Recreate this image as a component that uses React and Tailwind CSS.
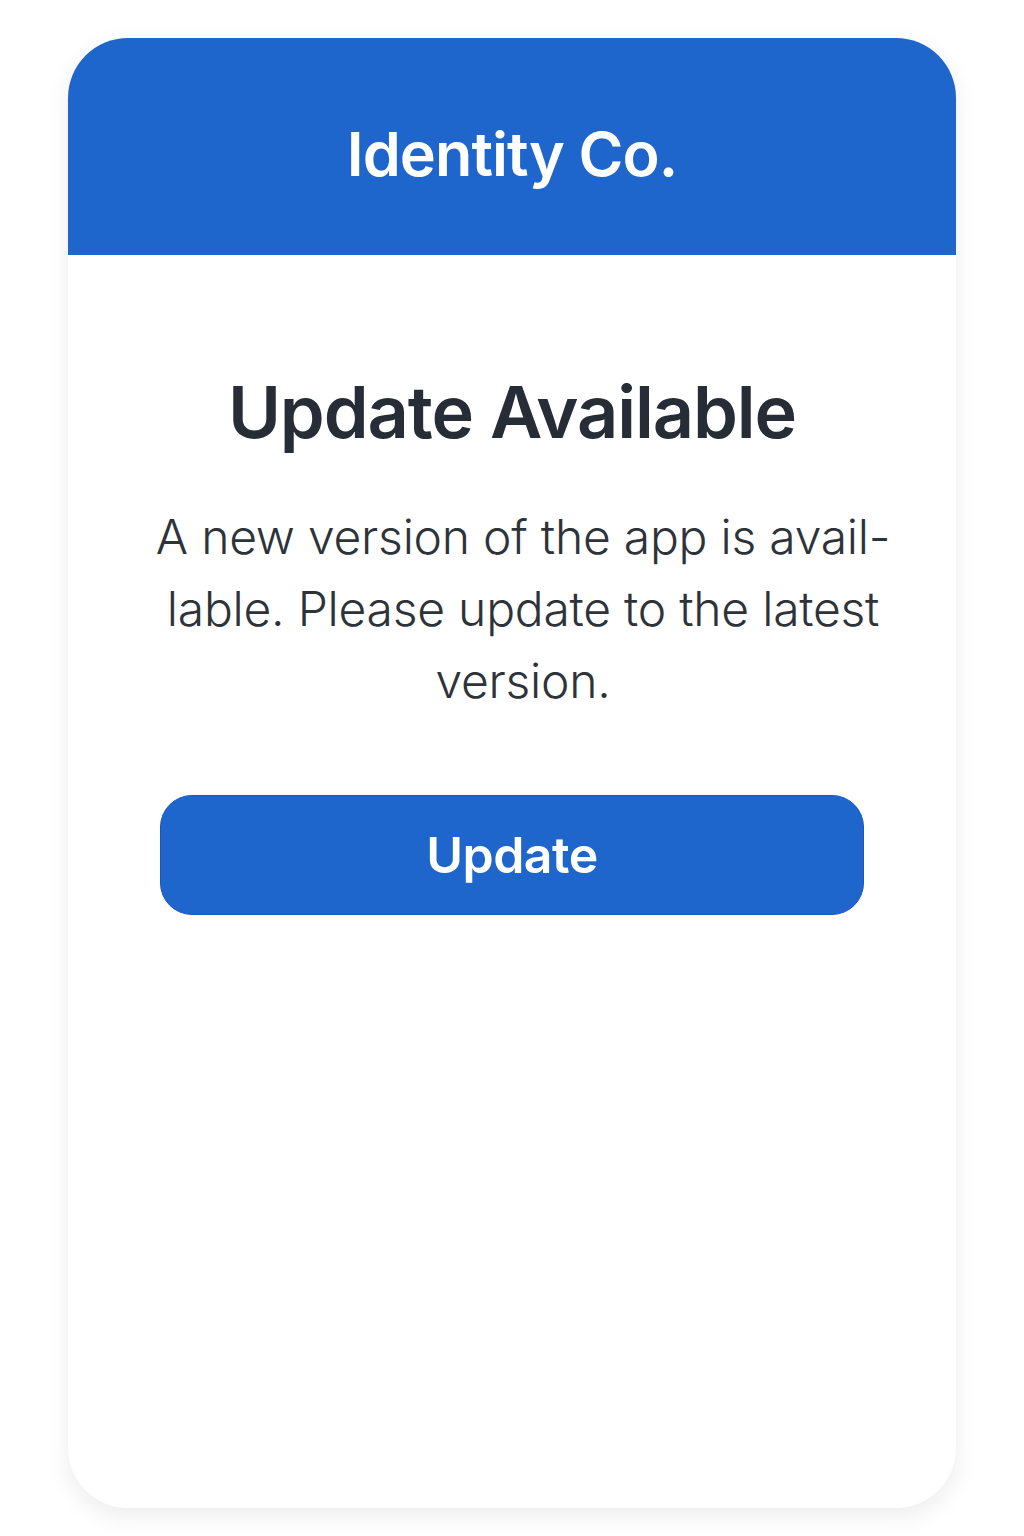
import React from 'react';

const App = () => {
  return (
    <div className="min-h-screen w-full bg-white px-[68px] pt-[38px] font-['Inter',sans-serif]">
      <div className="w-[888px] h-[1470px] bg-white rounded-[60px] overflow-hidden shadow-[0_8px_24px_rgba(0,0,0,0.08)] flex flex-col">
        {/* header */}
        <div className="h-[217px] bg-[#1f66cc] flex items-center justify-center pt-[16px]">
          <h1 className="text-white text-[61px] font-semibold tracking-[-0.015em]">Identity Co.</h1>
        </div>

        {/* body */}
        <div className="flex flex-col items-center px-[92px] pt-[112px]">
          <h2 className="text-[#262d36] text-[72px] font-semibold leading-[90px] tracking-[-0.015em]">Update Available</h2>
          <p className="mt-[44px] pl-[22px] text-[#2d3339] text-[48px] font-light leading-[72px] text-center tracking-[-0.005em] whitespace-nowrap">
            A new version of the app is avail-<br />lable. Please update to the latest<br />version.
          </p>
          <button className="mt-[78px] w-full h-[120px] rounded-[32px] bg-[#1f66cc] border border-[#1a56c2] text-white text-[50px] font-semibold tracking-[-0.01em]">
            Update
          </button>
        </div>
      </div>
    </div>
  );
};

export default App;
